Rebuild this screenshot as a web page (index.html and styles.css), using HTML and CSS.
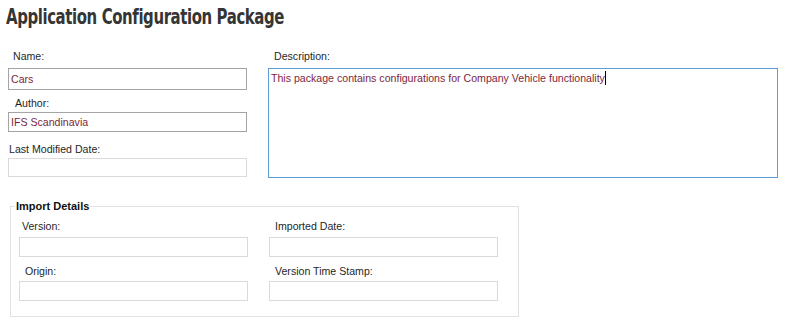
FILE: index.html
```html
<!DOCTYPE html>
<html>
<head>
<meta charset="utf-8">
<link rel="stylesheet" href="styles.css">
</head>
<body>
<div class="head"><h1 class="title">Application Configuration Package</h1></div>
<div class="top">
  <div class="col-left">
    <div class="lbl lbl-name">Name:</div>
    <div class="box box-name enabled">Cars</div>
    <div class="lbl lbl-author">Author:</div>
    <div class="box box-author enabled">IFS Scandinavia</div>
    <div class="lbl lbl-mod">Last Modified Date:</div>
    <div class="box box-mod disabled"></div>
  </div>
  <div class="col-right">
    <div class="lbl lbl-desc">Description:</div>
    <div class="desc">This package contains configurations for Company Vehicle functionality<span class="caret"></span></div>
  </div>
</div>
<fieldset class="group">
  <legend class="legend">Import Details</legend>
  <div class="grid">
    <div class="field">
      <div class="lbl g1 pl3">Version:</div>
      <div class="box gbox1 disabled"></div>
    </div>
    <div class="field">
      <div class="lbl g1 pl6">Imported Date:</div>
      <div class="box gbox1 disabled"></div>
    </div>
    <div class="field">
      <div class="lbl g2 pl6">Origin:</div>
      <div class="box gbox2 disabled"></div>
    </div>
    <div class="field">
      <div class="lbl g2 pl6">Version Time Stamp:</div>
      <div class="box gbox2 disabled"></div>
    </div>
  </div>
</fieldset>
</body>
</html>
```

FILE: styles.css
```css
html, body {
  margin: 0;
  padding: 0;
  background: #ffffff;
}
body {
  font-family: "Liberation Sans", Arial, sans-serif;
  font-size: 10.6px;
  color: #1f1f1f;
  width: 801px;
  height: 328px;
  overflow: hidden;
}
.head {
  height: 29px;
  padding: 5px 0 0 6px;
  box-sizing: border-box;
}
.title {
  display: inline-block;
  margin: 0;
  font-family: "DejaVu Sans Condensed", "DejaVu Sans", sans-serif;
  font-weight: bold;
  font-size: 21px;
  line-height: 24px;
  letter-spacing: -0.5px;
  color: #353535;
  transform: scaleX(0.79);
  transform-origin: 0 50%;
  white-space: nowrap;
}
.top {
  display: grid;
  grid-template-columns: 239px 510px;
  column-gap: 21px;
  padding-left: 8px;
  margin-top: 21px;
}
.col-left, .col-right {
  display: flex;
  flex-direction: column;
}
.lbl {
  height: 13px;
  line-height: 13px;
  white-space: nowrap;
}
.lbl-name { padding-left: 5px; margin-bottom: 5px; }
.lbl-author { padding-left: 7px; margin-top: 7px; margin-bottom: 2px; }
.lbl-mod { padding-left: 1px; margin-top: 11px; margin-bottom: 2px; }
.lbl-desc { padding-left: 6px; margin-bottom: 5px; }
.box {
  box-sizing: border-box;
  padding: 0 2px;
  color: #7d1f3c;
  white-space: nowrap;
}
.enabled { border: 1px solid #a4a4a4; }
.disabled { border: 1px solid #dadada; }
.box-name { height: 22px; line-height: 20px; }
.box-author { height: 20px; line-height: 18px; }
.box-mod { height: 19px; }
.desc {
  box-sizing: border-box;
  height: 110px;
  border: 1px solid #5c9ad8;
  padding: 2px 2px;
  line-height: 14px;
  color: #7d1f3c;
}
.caret {
  display: inline-block;
  width: 1px;
  height: 14px;
  background: #000;
  vertical-align: -3px;
}
.group {
  box-sizing: border-box;
  margin: 22px 0 0 10px;
  width: 509px;
  padding: 0 0 15px 8px;
  border: 1px solid #e2e2e2;
}
.legend {
  margin-left: -4px;
  padding: 0 1px;
  font-weight: bold;
  font-size: 11px;
  line-height: 13px;
  color: #111;
}
.grid {
  display: grid;
  grid-template-columns: 229px 229px;
  column-gap: 21px;
}
.field {
  display: flex;
  flex-direction: column;
}
.g1 { margin-top: 7px; margin-bottom: 4px; }
.g2 { margin-top: 8px; margin-bottom: 3px; }
.pl3 { padding-left: 3px; }
.pl6 { padding-left: 6px; }
.gbox1, .gbox2 { height: 20px; }
```
